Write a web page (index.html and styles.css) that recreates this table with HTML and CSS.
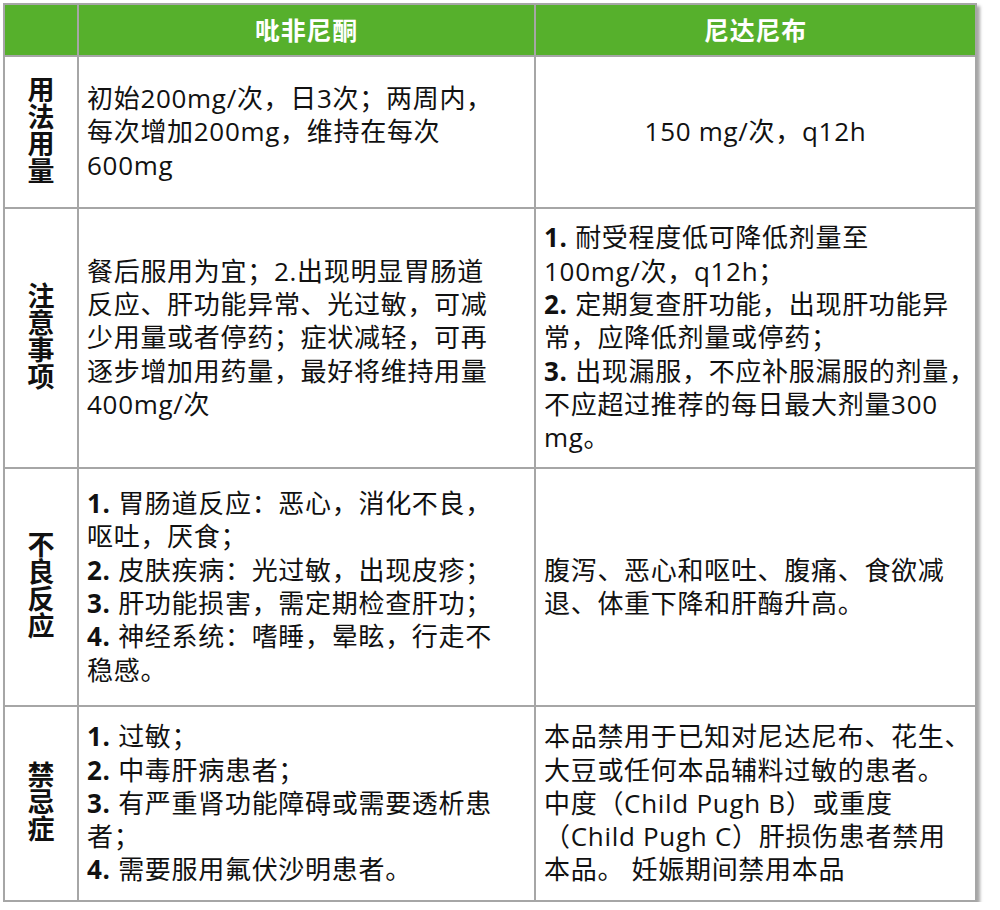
FILE: index.html
```html
<!DOCTYPE html>
<html lang="zh">
<head>
<meta charset="utf-8">
<link rel="stylesheet" href="styles.css">
</head>
<body>
<table class="cmp">
  <colgroup>
    <col class="c-label">
    <col class="c-a">
    <col class="c-b">
  </colgroup>
  <thead>
    <tr class="head">
      <th></th>
      <th>吡非尼酮</th>
      <th>尼达尼布</th>
    </tr>
  </thead>
  <tbody>
    <tr class="r1">
      <th class="label"><span>用法用量</span></th>
      <td>初始200mg/次，日3次；两周内，<br>每次增加200mg，维持在每次<br>600mg</td>
      <td class="center">150 mg/次，q12h</td>
    </tr>
    <tr class="r2">
      <th class="label"><span>注意事项</span></th>
      <td>餐后服用为宜；2.出现明显胃肠道<br>反应、肝功能异常、光过敏，可减<br>少用量或者停药；症状减轻，可再<br>逐步增加用药量，最好将维持用量<br>400mg/次</td>
      <td><b>1.</b> 耐受程度低可降低剂量至<br>100mg/次，q12h；<br><b>2.</b> 定期复查肝功能，出现肝功能异<br>常，应降低剂量或停药；<br><b>3.</b> 出现漏服，不应补服漏服的剂量，<br>不应超过推荐的每日最大剂量300<br>mg。</td>
    </tr>
    <tr class="r3">
      <th class="label"><span>不良反应</span></th>
      <td><b>1.</b> 胃肠道反应：恶心，消化不良，<br>呕吐，厌食；<br><b>2.</b> 皮肤疾病：光过敏，出现皮疹；<br><b>3.</b> 肝功能损害，需定期检查肝功；<br><b>4.</b> 神经系统：嗜睡，晕眩，行走不<br>稳感。</td>
      <td>腹泻、恶心和呕吐、腹痛、食欲减<br>退、体重下降和肝酶升高。</td>
    </tr>
    <tr class="r4">
      <th class="label"><span>禁忌症</span></th>
      <td><b>1.</b> 过敏；<br><b>2.</b> 中毒肝病患者；<br><b>3.</b> 有严重肾功能障碍或需要透析患<br>者；<br><b>4.</b> 需要服用氟伏沙明患者。</td>
      <td>本品禁用于已知对尼达尼布、花生、<br>大豆或任何本品辅料过敏的患者。<br>中度（Child Pugh B）或重度<br>（Child Pugh C）肝损伤患者禁用<br>本品。 妊娠期间禁用本品</td>
    </tr>
  </tbody>
</table>
</body>
</html>
```

FILE: styles.css
```css
html, body {
  margin: 0;
  padding: 0;
  background: #ffffff;
}

body {
  padding: 3px 0 0 3px;
  font-family: "Open Sans", "Noto Sans CJK SC", sans-serif;
  color: #111111;
}

.cmp {
  border-collapse: collapse;
  table-layout: fixed;
  width: 972px;
  box-shadow: 3px 3px 3px rgba(0, 0, 0, 0.35);
}

.c-label { width: 74px; }
.c-a { width: 457px; }
.c-b { width: 441px; }

.cmp th,
.cmp td {
  border: 2px solid #a6a6a6;
  padding: 0 0 0 8px;
  vertical-align: middle;
  text-align: left;
  white-space: nowrap;
  font-size: 26px;
  line-height: 33.3px;
  letter-spacing: 0.7px;
  font-weight: 400;
}

.head th {
  background: #56b02c;
  color: #ffffff;
  font-weight: 700;
  text-align: center;
  height: 50px;
  padding: 0;
  font-size: 25px;
  line-height: 30px;
}

.cmp th.label {
  padding: 0;
  text-align: center;
  font-weight: 700;
}

.label span {
  display: inline-block;
  width: 1em;
  white-space: normal;
  word-break: break-all;
  letter-spacing: 0;
  line-height: 27px;
  font-weight: 700;
  font-size: 27px;
}

.cmp td.center {
  text-align: center;
  padding: 0;
}

.r1 > * { height: 150px; }
.r2 > * { height: 258px; }
.r3 > * { height: 236px; }
.r4 > * { height: 193px; }

.cmp b {
  font-weight: 700;
}
```
